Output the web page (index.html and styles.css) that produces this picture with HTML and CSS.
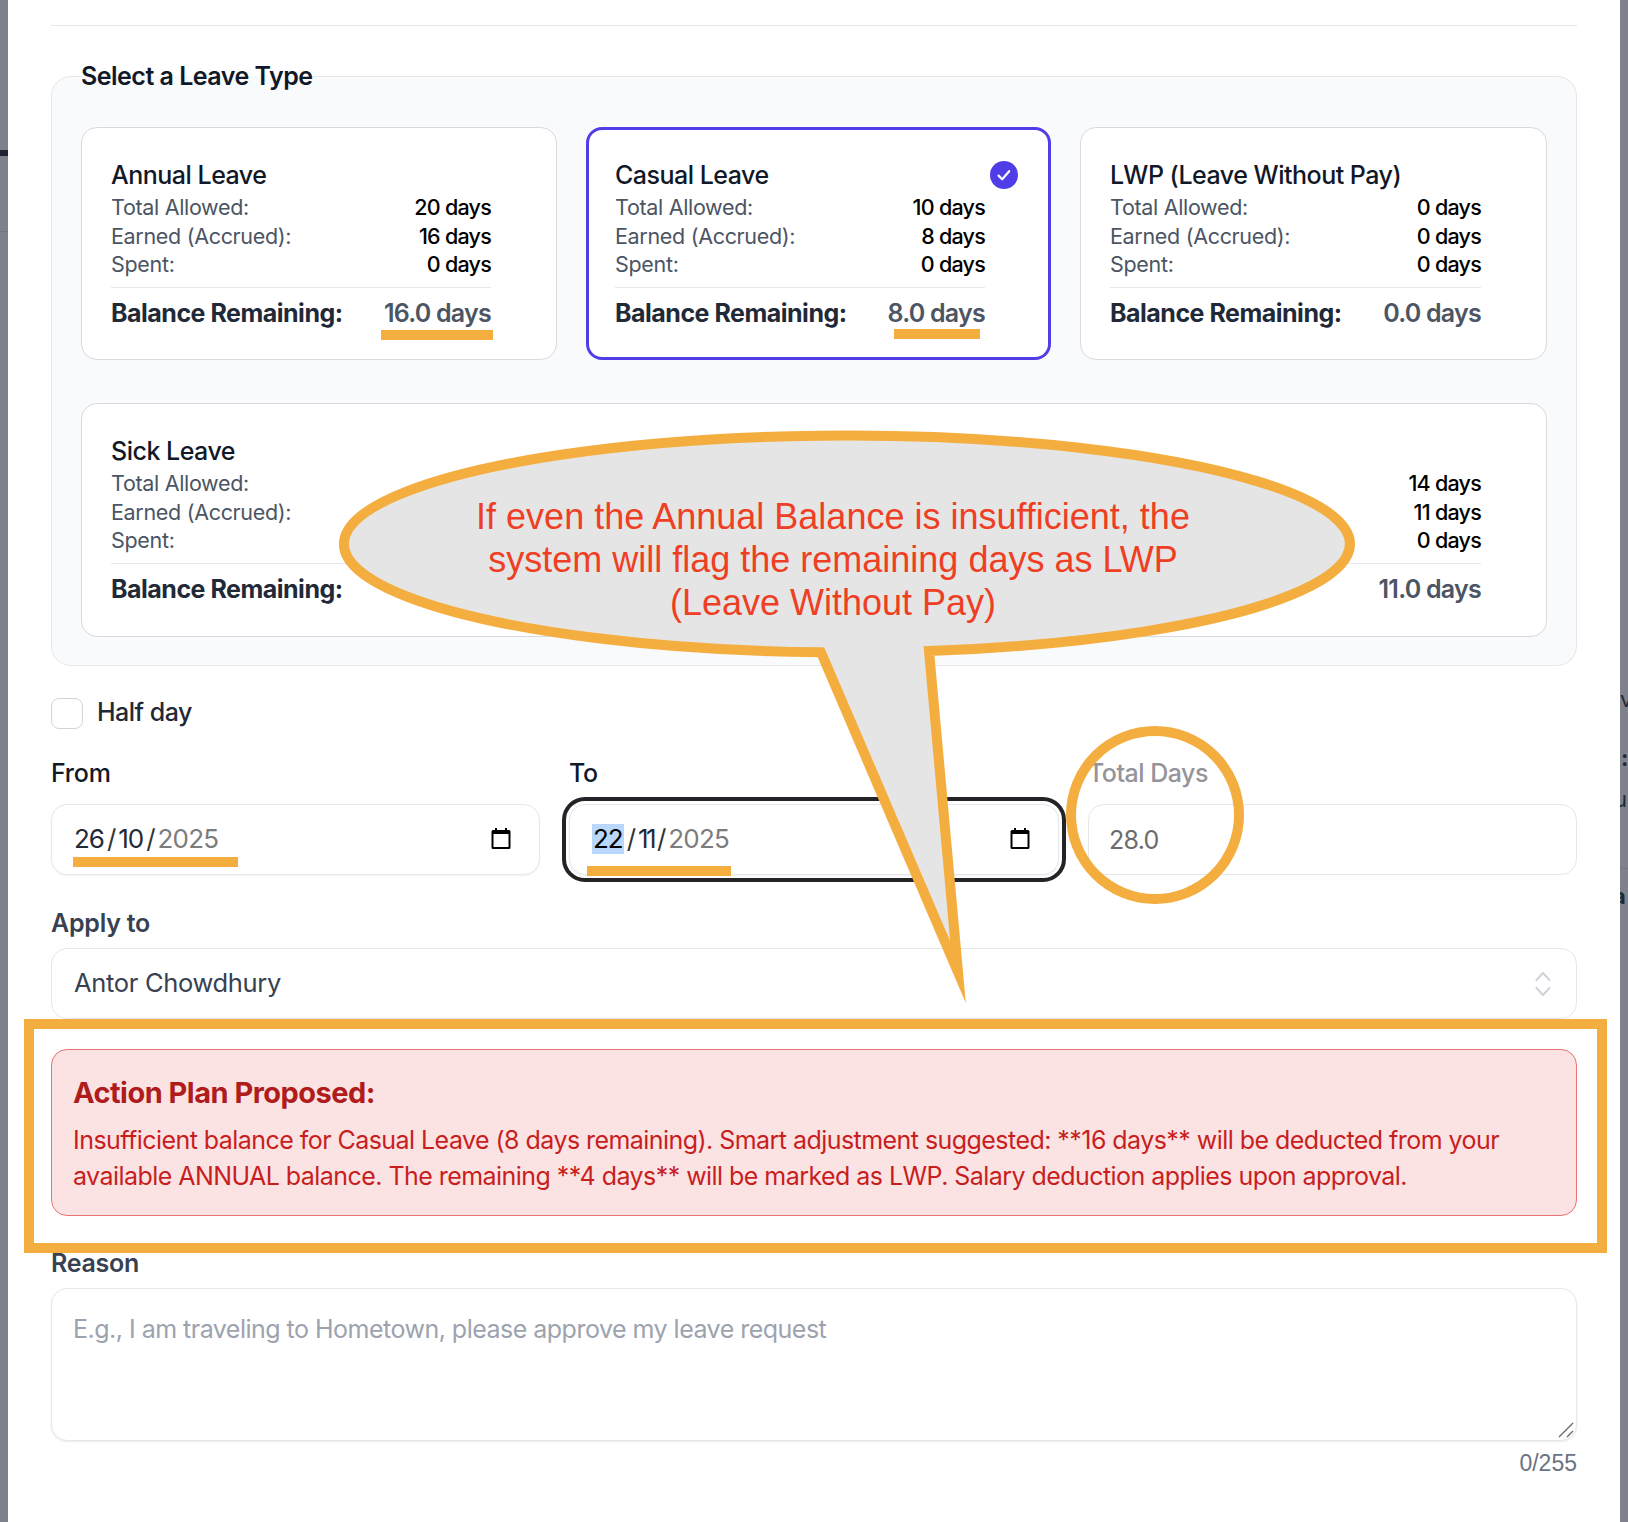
FILE: index.html
```html
<!DOCTYPE html>
<html lang="en">
<head>
<meta charset="utf-8">
<title>Apply for Leave</title>
<link rel="stylesheet" href="styles.css">
</head>
<body>
<div class="page">
  <div class="strip strip-left"><span class="strip-bar"></span></div>
  <main class="panel">
    <hr class="top-rule">
    <fieldset class="types">
      <legend>Select a Leave Type</legend>
      <div class="card-grid">
        <article class="card">
          <h3 class="card-title">Annual Leave</h3>
          <div class="row"><span>Total Allowed:</span><b>20 days</b></div>
          <div class="row"><span>Earned (Accrued):</span><b>16 days</b></div>
          <div class="row"><span>Spent:</span><b>0 days</b></div>
          <div class="balance"><span>Balance Remaining:</span><b>16.0 days</b></div>
        </article>
        <article class="card card-active">
          <h3 class="card-title">Casual Leave</h3>
          <svg class="check" viewBox="0 0 28 28" width="28" height="28"><circle cx="14" cy="14" r="14" fill="#4f3ee8"/><path d="M8.6 14.6l3.6 3.6 7-8" fill="none" stroke="#fff" stroke-width="2.2" stroke-linecap="round" stroke-linejoin="round"/></svg>
          <div class="row"><span>Total Allowed:</span><b>10 days</b></div>
          <div class="row"><span>Earned (Accrued):</span><b>8 days</b></div>
          <div class="row"><span>Spent:</span><b>0 days</b></div>
          <div class="balance"><span>Balance Remaining:</span><b>8.0 days</b></div>
        </article>
        <article class="card">
          <h3 class="card-title">LWP (Leave Without Pay)</h3>
          <div class="row"><span>Total Allowed:</span><b>0 days</b></div>
          <div class="row"><span>Earned (Accrued):</span><b>0 days</b></div>
          <div class="row"><span>Spent:</span><b>0 days</b></div>
          <div class="balance"><span>Balance Remaining:</span><b>0.0 days</b></div>
        </article>
        <article class="card card-wide">
          <h3 class="card-title">Sick Leave</h3>
          <div class="row"><span>Total Allowed:</span><b>14 days</b></div>
          <div class="row"><span>Earned (Accrued):</span><b>11 days</b></div>
          <div class="row"><span>Spent:</span><b>0 days</b></div>
          <div class="balance"><span>Balance Remaining:</span><b>11.0 days</b></div>
        </article>
      </div>
    </fieldset>

    <div class="half-day"><span class="checkbox"></span><span class="half-label">Half day</span></div>

    <div class="date-grid">
      <div class="field">
        <div class="label">From</div>
        <div class="input">
          <span class="date"><span>26</span><i>/</i><span>10</span><i>/</i><em>2025</em></span>
          <svg class="cal" viewBox="0 0 20 22" width="20" height="22"><path d="M5 0v3M15 0v3" stroke="#000" stroke-width="2"/><path d="M2 2h16a1.500 1.500 0 0 1 1.500 1.500v16A1.500 1.500 0 0 1 18 21H2A1.500 1.500 0 0 1 .5 19.500v-16A1.500 1.500 0 0 1 2 2z" fill="#000"/><rect x="2.500" y="6" width="15" height="13" fill="#fff"/></svg>
        </div>
      </div>
      <div class="field">
        <div class="label">To</div>
        <div class="input input-focus">
          <span class="date"><span class="sel">22</span><i>/</i><span class="tight">11</span><i>/</i><em>2025</em></span>
          <svg class="cal" viewBox="0 0 20 22" width="20" height="22"><path d="M5 0v3M15 0v3" stroke="#000" stroke-width="2"/><path d="M2 2h16a1.500 1.500 0 0 1 1.500 1.500v16A1.500 1.500 0 0 1 18 21H2A1.500 1.500 0 0 1 .5 19.500v-16A1.500 1.500 0 0 1 2 2z" fill="#000"/><rect x="2.500" y="6" width="15" height="13" fill="#fff"/></svg>
        </div>
      </div>
      <div class="field">
        <div class="label label-muted">Total Days</div>
        <div class="input input-disabled"><span class="total">28.0</span></div>
      </div>
    </div>

    <div class="label label-strong apply-label">Apply to</div>
    <div class="input select">
      <span class="select-value">Antor Chowdhury</span>
      <svg class="chev" viewBox="0 0 16 26" width="16" height="26"><path d="M1.500 9l6.500-7 6.500 7M1.500 17l6.500 7 6.500-7" fill="none" stroke="#d1d5db" stroke-width="2.200" stroke-linecap="round" stroke-linejoin="round"/></svg>
    </div>

    <section class="alert">
      <h4 class="alert-title">Action Plan Proposed:</h4>
      <p class="alert-body">Insufficient balance for Casual Leave (8 days remaining). Smart adjustment suggested: **16 days** will be deducted from your available ANNUAL balance. The remaining **4 days** will be marked as LWP. Salary deduction applies upon approval.</p>
    </section>

    <div class="label label-strong reason-label">Reason</div>
    <div class="textarea">
      <span class="placeholder">E.g., I am traveling to Hometown, please approve my leave request</span>
      <svg class="grip" viewBox="0 0 16 16" width="16" height="16"><path d="M1 15L15 1M9 15l6-6" stroke="#6b6b6b" stroke-width="1.400" fill="none"/></svg>
    </div>
    <div class="counter">0/255</div>
  </main>
  <div class="strip strip-right">
    <span class="frag frag-v">v</span><span class="frag frag-c">:</span><span class="frag frag-u">u</span><span class="frag frag-a">a</span>
  </div>
</div>

<svg class="marks" viewBox="0 0 1628 1522" width="1628" height="1522">
  <g fill="#f4ae3f">
    <rect x="381" y="330" width="112" height="10"/>
    <rect x="894" y="329" width="86" height="10"/>
    <rect x="73" y="857" width="165" height="10"/>
    <rect x="587" y="866" width="144" height="10"/>
  </g>
  <g fill="none" stroke="#f4ae3f" stroke-width="10">
    <ellipse cx="1155" cy="815" rx="84" ry="84"/>
    <rect x="29" y="1024" width="1573" height="224"/>
  </g>
  <path d="M821 652.360 A503 108.500 0 1 1 929 651.050 L958 972 Z" fill="#e5e5e5" stroke="#f4ae3f" stroke-width="10" stroke-miterlimit="12"/>
</svg>
<div class="callout">If even the Annual Balance is insufficient, the<br>system will flag the remaining days as LWP<br>(Leave Without Pay)</div>
</body>
</html>
```
FILE: styles.css
```css
* { box-sizing: border-box; }
html, body { margin: 0; padding: 0; background: #fff; }
body { font-family: Inter, "Liberation Sans", sans-serif; letter-spacing: -0.02em; color: #111827; position: relative; width: 1628px; height: 1522px; overflow: hidden; }
.page { display: flex; height: 1522px; }
.strip { width: 8px; flex: none; background: #7f828b; position: relative; overflow: hidden; }
.strip-bar { position: absolute; left: 0; top: 150px; width: 8px; height: 6px; background: #1e2433; }
.strip-left { background: linear-gradient(#7f828b 231px, #74777f 231px, #74777f 232px, #7f828b 232px); }
.strip-right { background: linear-gradient(#7f828b 868px, #74777f 868px, #74777f 869px, #7f828b 869px); }
.frag { position: absolute; left: 0; font-size: 22px; line-height: 26px; color: #1f2937; }
.frag-v { top: 686px; }
.frag-c { top: 745px; left: 1px; font-weight: 700; }
.frag-u { top: 786px; left: -6px; }
.frag-a { top: 883px; left: -7px; font-weight: 700; }

.panel { width: 1612px; flex: none; padding: 25px 43px 0; background: #fff; }
.top-rule { border: 0; height: 1px; background: #e5e7eb; margin: 0 0 35px; }

.types { margin: 0; padding: 0 29px 28px; border: 1px solid #e5e7eb; border-radius: 20px; background: #f9fafb; }
.types legend { padding: 0; font-size: 25px; line-height: 30px; font-weight: 600; color: #111827; letter-spacing: -0.02em; }
.card-grid { display: grid; grid-template-columns: 476px 465px 467px; gap: 43px 29px; margin-top: 36px; }
.card { position: relative; height: 233px; padding: 30px 65px 0 29px; background: #fff; border: 1px solid #d8dae0; border-radius: 16px; }
.card-active { border: 3px solid #4f3ee8; padding: 28px 63px 0 26px; }
.card-wide { grid-column: 1 / 4; height: 234px; }
.card-title { margin: 0 0 1px; font-size: 25px; line-height: 34px; font-weight: 500; color: #111827; letter-spacing: -0.02em; }
.check { position: absolute; top: 31px; right: 30px; }
.row { display: flex; justify-content: space-between; font-size: 21.500px; line-height: 28.500px; }
.row span { color: #4b5563; font-weight: 400; }
.row b { color: #000; font-weight: 500; letter-spacing: -0.035em; }
.balance { display: flex; justify-content: space-between; margin-top: 8px; padding-top: 7px; border-top: 1px solid #e5e7eb; font-size: 25px; line-height: 36px; font-weight: 700; letter-spacing: -0.02em; }
.balance span { color: #1f2937; }
.balance b { color: #4b5563; font-weight: 600; letter-spacing: -0.03em; }

.half-day { display: flex; align-items: center; gap: 14px; margin-top: 32px; height: 31px; }
.checkbox { width: 32px; height: 31px; border: 1px solid #d1d5db; border-radius: 8px; background: #fff; }
.half-label { margin-top: -3px; font-size: 25px; font-weight: 500; color: #1f2937; letter-spacing: -0.02em; }

.date-grid { display: grid; grid-template-columns: 489px 490px 489px; gap: 29px; margin-top: 29px; }
.field { display: flex; flex-direction: column; gap: 15px; }
.label { font-size: 25px; line-height: 31px; font-weight: 500; color: #111827; letter-spacing: -0.01em; }
.label-muted { color: #94949a; letter-spacing: -0.02em; }
.label-strong { color: #374151; font-weight: 600; }
.input { position: relative; display: flex; align-items: center; justify-content: space-between; height: 71px; padding: 0 8px 0 22px; border: 1px solid #e5e7eb; border-radius: 16px; background: #fff; box-shadow: 0 1px 2px rgba(0,0,0,.06); }
.input-focus { outline: 4px solid #222428; outline-offset: 3px; }
.input-disabled { box-shadow: none; padding-left: 20px; }
.input .cal { margin: -2px 20px 0 0; }
.date { display: flex; align-items: center; font-size: 26px; line-height: 30px; margin-top: -2px; color: #1f2937; letter-spacing: -0.04em; }
.date i { font-style: normal; margin: 0 3px; color: #333; }
.date em { font-style: normal; color: #7c7c7c; letter-spacing: -0.03em; }
.sel { background: #b9d6fb; color: #000; padding: 0 1px; }
.tight { letter-spacing: -0.1em; }
.total { font-size: 25px; color: #6b6b6b; letter-spacing: -0.03em; }
.apply-label { margin-top: 33px; }
.select { margin-top: 9px; box-shadow: none; }
.select-value { font-size: 25.500px; margin-top: -2px; color: #374151; }
.select .chev { margin-right: 17px; }

.alert { margin-top: 30px; height: 167px; padding: 24px 21px 0; background: #fbe3e4; border: 1px solid #e87474; border-radius: 16px; }
.alert-title { margin: 0; font-size: 29px; line-height: 38px; font-weight: 700; color: #b01c1c; letter-spacing: -0.018em; }
.alert-body { margin: 10px 0 0; font-size: 25px; line-height: 36px; color: #c81e1e; letter-spacing: -0.022em; }
.reason-label { margin-top: 32px; }
.textarea { position: relative; height: 153px; margin-top: 9px; padding: 23px 21px; border: 1px solid #e5e7eb; border-radius: 16px; background: #fff; box-shadow: 0 1px 2px rgba(0,0,0,.08); }
.placeholder { font-size: 25px; line-height: 34px; color: #9ca3af; display: block; letter-spacing: -0.0205em; }
.grip { position: absolute; right: 2px; bottom: 2px; }
.counter { margin-top: 9px; text-align: right; font-family: "Liberation Sans", Arial, sans-serif; font-size: 23px; line-height: 26px; letter-spacing: 0; color: #6b7280; }

.marks { position: absolute; left: 0; top: 0; pointer-events: none; }
.callout { position: absolute; left: 433px; top: 495px; width: 800px; text-align: center; font-family: "Liberation Sans", Arial, sans-serif; font-size: 36px; line-height: 43px; letter-spacing: 0; color: #ee3f24; }
```
